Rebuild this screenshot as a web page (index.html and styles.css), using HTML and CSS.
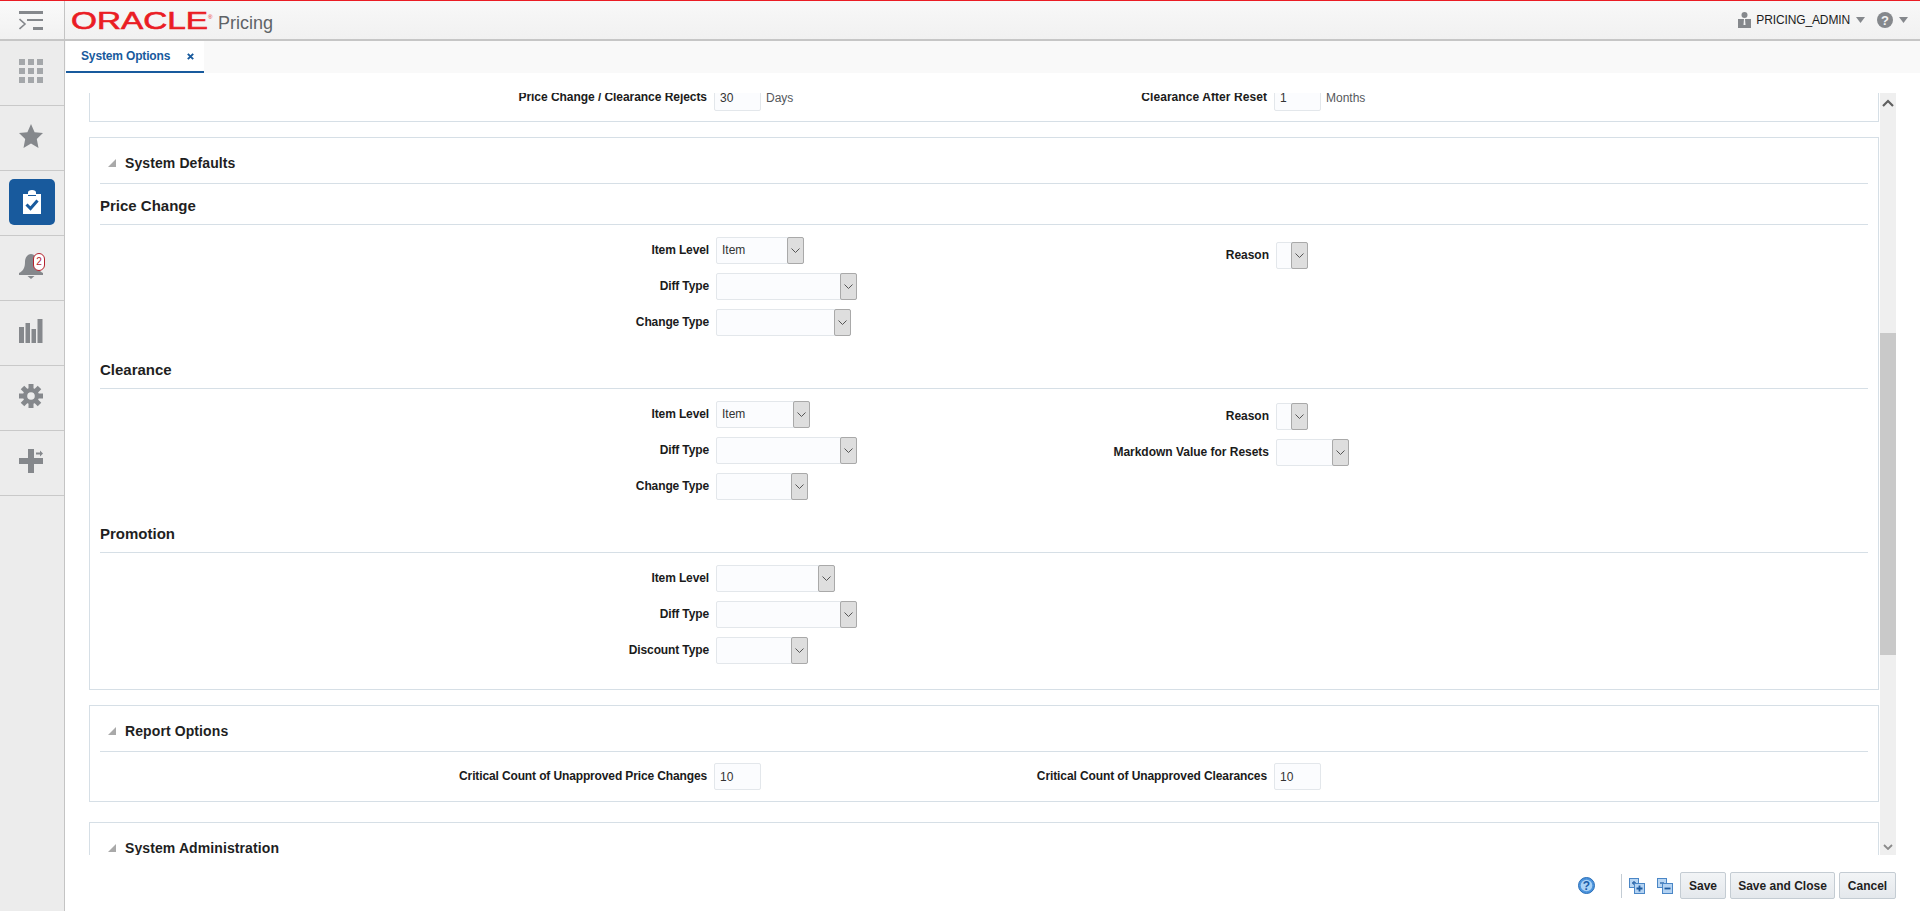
FILE: index.html
```html
<!DOCTYPE html>
<html lang="en">
<head>
<meta charset="utf-8">
<title>System Options</title>
<link rel="stylesheet" href="styles.css">
</head>
<body>
<svg class="defs" width="0" height="0" aria-hidden="true">
  <symbol id="chev" viewBox="0 0 9 5"><path d="M.5.5 4.500 4.500 8.500.5" fill="none" stroke="#555" stroke-width="1"/></symbol>
  <symbol id="tri" viewBox="0 0 8 8"><path d="M8 0V8H0Z" fill="#a9a9a9"/></symbol>
</svg>
<div class="app">
  <nav class="side">
    <div class="side-top">
      <svg width="24" height="20" viewBox="0 0 24 20"><path d="M0 0H24V3H0ZM8 8H24V10H8ZM14 16H24V19H14Z" fill="#85888c"/><path d="M.5 8 6 13 .5 18" fill="none" stroke="#85888c" stroke-width="1.600"/></svg>
    </div>
    <div class="side-item">
      <svg width="24" height="24" viewBox="0 0 24 24" fill="#a4a7aa"><path d="M0 0H6V6H0ZM9 0H15V6H9ZM18 0H24V6H18ZM0 9H6V15H0ZM9 9H15V15H9ZM18 9H24V15H18ZM0 18H6V24H0ZM9 18H15V24H9ZM18 18H24V24H18Z"/></svg>
    </div>
    <div class="side-item">
      <svg width="24" height="24" viewBox="0 0 24 24"><path d="M12 0 15.600 8.200 24 9.100 17.800 15 19.500 24 12 19.400 4.500 24 6.200 15 0 9.100 8.400 8.200Z" fill="#85888c"/></svg>
    </div>
    <div class="side-item">
      <div class="side-active">
        <svg width="18" height="24" viewBox="0 0 18 24"><path d="M0 4H5V2.500A4 2.500 0 0 1 13 2.500V4H18V24H0Z" fill="#fff"/><path d="M5 5.500H13" stroke="#185a9d" stroke-width="1"/><path d="M3.500 14.500 7.500 18.500 14.500 10.500" fill="none" stroke="#185a9d" stroke-width="3"/></svg>
      </div>
    </div>
    <div class="side-item">
      <span class="bell">
        <svg width="24" height="25" viewBox="0 0 24 25"><path d="M12 0C15 0 18 3 18 8 18 14 20 17 24 19V21H0V19C4 17 6 14 6 8 6 3 9 0 12 0Z" fill="#85888c"/><path d="M8.500 22H15.500L12 25Z" fill="#85888c"/></svg>
        <span class="badge">2</span>
      </span>
    </div>
    <div class="side-item">
      <svg width="24" height="24" viewBox="0 0 24 24" fill="#85888c"><path d="M0 8H5V24H0ZM6.500 4H11V24H6.500ZM12.500 10H17V24H12.500ZM18.500 0H23.500V24H18.500Z"/></svg>
    </div>
    <div class="side-item">
      <svg width="24" height="24" viewBox="0 0 24 24"><g stroke="#85888c" stroke-width="5"><path d="M12 0V24M0 12H24M3.500 3.500 20.500 20.500M20.500 3.500 3.500 20.500"/></g><circle cx="12" cy="12" r="8" fill="#85888c"/><circle cx="12" cy="12" r="3.800" fill="#ececec"/></svg>
    </div>
    <div class="side-item">
      <svg width="24" height="24" viewBox="0 0 24 24" fill="#85888c"><path d="M9 0H15V9H24V15H15V24H9V15H0V9H9Z"/><path d="M17 3.500H21V1.500L24 4.500 21 7.500V5.500H17Z"/></svg>
    </div>
  </nav>
  <div class="main">
    <header class="top">
      <svg class="logo" width="147" height="22" viewBox="0 0 147 22"><text x="0" y="20" textLength="137" lengthAdjust="spacingAndGlyphs" class="logo-text">ORACLE</text><text x="137" y="10" class="logo-reg">®</text></svg>
      <span class="app-name">Pricing</span>
      <span class="spacer"></span>
      <svg class="u-ic" width="13" height="16" viewBox="0 0 13 16" fill="#85888c"><circle cx="6.500" cy="3" r="3"/><path d="M0 7H13V16H0Z"/><path d="M6 7H7L7.500 13H5.500Z" fill="#f4f4f4"/></svg>
      <span class="user">PRICING_ADMIN</span>
      <svg class="tri-d" width="9" height="6" viewBox="0 0 9 6"><path d="M0 0H9L4.500 6Z" fill="#85888c"/></svg>
      <svg class="help-ic" width="16" height="16" viewBox="0 0 16 16"><circle cx="8" cy="8" r="8" fill="#85888c"/><text x="8" y="12.500" class="q-grey">?</text></svg>
      <svg class="tri-d2" width="9" height="6" viewBox="0 0 9 6"><path d="M0 0H9L4.500 6Z" fill="#85888c"/></svg>
    </header>
    <div class="tabs">
      <div class="tab"><span>System Options</span><svg class="tab-x" width="7" height="7" viewBox="0 0 7 7"><path d="M.8.8 6.200 6.200M6.200.8.8 6.200" stroke="#185a9d" stroke-width="1.900"/></svg></div>
    </div>
    <div class="scroll">
      <div class="panels">
        <section class="panel panel-clip">
          <div class="inline-row">
            <div class="pair pair-a"><label class="lbl lbl-a lbl-tight">Price Change / Clearance Rejects</label><span class="inp">30</span><span class="unit">Days</span></div>
            <div class="pair"><label class="lbl lbl-b lbl-wide">Clearance After Reset</label><span class="inp">1</span><span class="unit">Months</span></div>
          </div>
        </section>

        <section class="panel panel-main">
          <h2 class="p-head"><svg class="tw" width="8" height="8" viewBox="0 0 8 8"><use href="#tri"/></svg>System Defaults</h2>

          <h3 class="s-head">Price Change</h3>
          <div class="cols">
            <div class="col-l">
              <div class="field"><label class="lbl lbl-l">Item Level</label><span class="sel w88"><span class="val">Item</span><span class="btn"><svg width="9" height="5"><use href="#chev"/></svg></span></span></div>
              <div class="field"><label class="lbl lbl-l">Diff Type</label><span class="sel w141"><span class="val"></span><span class="btn"><svg width="9" height="5"><use href="#chev"/></svg></span></span></div>
              <div class="field"><label class="lbl lbl-l">Change Type</label><span class="sel w135"><span class="val"></span><span class="btn"><svg width="9" height="5"><use href="#chev"/></svg></span></span></div>
            </div>
            <div class="col-r r5">
              <div class="field"><label class="lbl lbl-r">Reason</label><span class="sel w32"><span class="val"></span><span class="btn"><svg width="9" height="5"><use href="#chev"/></svg></span></span></div>
            </div>
          </div>

          <h3 class="s-head s-next">Clearance</h3>
          <div class="cols">
            <div class="col-l">
              <div class="field"><label class="lbl lbl-l">Item Level</label><span class="sel w94"><span class="val">Item</span><span class="btn"><svg width="9" height="5"><use href="#chev"/></svg></span></span></div>
              <div class="field"><label class="lbl lbl-l">Diff Type</label><span class="sel w141"><span class="val"></span><span class="btn"><svg width="9" height="5"><use href="#chev"/></svg></span></span></div>
              <div class="field"><label class="lbl lbl-l">Change Type</label><span class="sel w92"><span class="val"></span><span class="btn"><svg width="9" height="5"><use href="#chev"/></svg></span></span></div>
            </div>
            <div class="col-r r2">
              <div class="field"><label class="lbl lbl-r">Reason</label><span class="sel w32"><span class="val"></span><span class="btn"><svg width="9" height="5"><use href="#chev"/></svg></span></span></div>
              <div class="field"><label class="lbl lbl-r">Markdown Value for Resets</label><span class="sel w73"><span class="val"></span><span class="btn"><svg width="9" height="5"><use href="#chev"/></svg></span></span></div>
            </div>
          </div>

          <h3 class="s-head s-next">Promotion</h3>
          <div class="cols">
            <div class="col-l">
              <div class="field"><label class="lbl lbl-l">Item Level</label><span class="sel w119"><span class="val"></span><span class="btn"><svg width="9" height="5"><use href="#chev"/></svg></span></span></div>
              <div class="field"><label class="lbl lbl-l">Diff Type</label><span class="sel w141"><span class="val"></span><span class="btn"><svg width="9" height="5"><use href="#chev"/></svg></span></span></div>
              <div class="field"><label class="lbl lbl-l">Discount Type</label><span class="sel w92"><span class="val"></span><span class="btn"><svg width="9" height="5"><use href="#chev"/></svg></span></span></div>
            </div>
          </div>
        </section>

        <section class="panel panel-report">
          <h2 class="p-head"><svg class="tw" width="8" height="8" viewBox="0 0 8 8"><use href="#tri"/></svg>Report Options</h2>
          <div class="inline-row report-row">
            <div class="pair pair-a"><label class="lbl lbl-a">Critical Count of Unapproved Price Changes</label><span class="inp">10</span></div>
            <div class="pair"><label class="lbl lbl-b">Critical Count of Unapproved Clearances</label><span class="inp">10</span></div>
          </div>
        </section>

        <section class="panel panel-admin">
          <h2 class="p-head"><svg class="tw" width="8" height="8" viewBox="0 0 8 8"><use href="#tri"/></svg>System Administration</h2>
        </section>
      </div>
      <div class="sbar">
        <svg class="sb-up" width="12" height="8" viewBox="0 0 12 8"><path d="M1 7 6 2 11 7" fill="none" stroke="#5f5f5f" stroke-width="2.200"/></svg>
        <div class="sb-thumb"></div>
        <span class="sb-fill"></span>
        <svg class="sb-dn" width="10" height="6" viewBox="0 0 10 6"><path d="M1 1 5 5 9 1" fill="none" stroke="#8a8a8a" stroke-width="1.800"/></svg>
      </div>
    </div>
    <footer class="foot">
      <svg class="f-help" width="17" height="17" viewBox="0 0 17 17"><circle cx="8.500" cy="8.500" r="8" fill="#4b93dc" stroke="#2a6fb8"/><circle cx="8.500" cy="8.500" r="5.800" fill="#a9d2f6"/><text x="8.500" y="13" class="q-blue">?</text></svg>
      <span class="f-sep"></span>
      <svg class="f-ic" width="16" height="16" viewBox="0 0 16 16"><rect x=".5" y=".5" width="9" height="9" fill="#b9d6f3" stroke="#4a86c6"/><path d="M5 3V7M3 5H7" stroke="#2a64a8" stroke-width="1.300"/><rect x="5.500" y="5.500" width="10" height="10" fill="#b3d2f2" stroke="#4a86c6"/><path d="M10.500 7.500V13.500M7.500 10.500H13.500" stroke="#1d5aa0" stroke-width="1.800"/></svg>
      <svg class="f-ic f-ic2" width="16" height="16" viewBox="0 0 16 16"><rect x=".5" y=".5" width="9" height="9" fill="#b9d6f3" stroke="#4a86c6"/><path d="M3 5H7" stroke="#2a64a8" stroke-width="1.300"/><rect x="5.500" y="5.500" width="10" height="10" fill="#b3d2f2" stroke="#4a86c6"/><path d="M7.500 10.500H13.500" stroke="#1d5aa0" stroke-width="1.800"/></svg>
      <button class="fbtn b-save">Save</button>
      <button class="fbtn b-sc">Save and Close</button>
      <button class="fbtn b-can">Cancel</button>
    </footer>
  </div>
</div>
</body>
</html>
```
FILE: styles.css
```css
* { box-sizing: border-box; }
html, body { margin: 0; height: 911px; overflow: hidden; background: #fff; }
body { font-family: "Liberation Sans", Arial, sans-serif; font-size: 12px; color: #1b1b1b; }
.defs { position: absolute; }
.app { display: flex; height: 911px; border-top: 1px solid #ea1c24; }

/* sidebar */
.side { width: 65px; flex: none; background: #ececec; border-right: 1px solid #c4c4c4; display: flex; flex-direction: column; }
.side-top { height: 40px; flex: none; background: linear-gradient(#fafafa, #f1f1f1); border-bottom: 2px solid #c6c6c6; padding: 10px 0 0 19px; }
.side-top svg { display: block; }
.side-item { height: 65px; flex: none; border-bottom: 1px solid #c9c9c9; display: flex; align-items: center; padding: 0 0 4px 19px; }
.side-active { width: 46px; height: 46px; margin: 2px 0 0 -10px; border-radius: 5px; background: #185a9d; display: flex; align-items: center; justify-content: center; }
.bell { position: relative; display: block; width: 24px; height: 25px; }
.bell svg { display: block; }
.badge { position: absolute; top: -1px; left: 14px; width: 12px; height: 18px; border: 1px solid #b5222d; border-radius: 6px; background: #fff; color: #b5222d; font-size: 10px; line-height: 16px; text-align: center; }

/* main */
.main { flex: 1; min-width: 0; display: flex; flex-direction: column; }
.top { height: 40px; flex: none; display: flex; align-items: center; background: linear-gradient(#f8f8f8, #f1f1f1); border-bottom: 2px solid #c6c6c6; padding: 0 0 0 6px; }
.logo { display: block; flex: none; }
.logo-text { font-family: "Liberation Sans", sans-serif; font-weight: 400; font-size: 23px; fill: #ea1c24; stroke: #ea1c24; stroke-width: .6px; }
.logo-reg { font-size: 6px; fill: #ea1c24; }
.app-name { font-size: 18px; color: #5f6367; margin-top: 7px; }
.spacer { flex: 1; }
.u-ic { display: block; }
.user { margin-left: 5px; font-size: 12px; letter-spacing: -.13px; color: #1c1c1c; }
.tri-d { margin-left: 6px; }
.help-ic { margin-left: 12px; }
.tri-d2 { margin-left: 6px; margin-right: 12px; }
.q-grey { font: 700 13px "Liberation Sans", sans-serif; fill: #f4f4f4; text-anchor: middle; }
.q-blue { font: 700 12px "Liberation Sans", sans-serif; fill: #1a5ca8; text-anchor: middle; }

.tabs { height: 32px; flex: none; background: #f9f9f9; display: flex; padding-left: 1px; }
.tab { width: 138px; background: #fff; border-bottom: 2px solid #185a9d; display: flex; align-items: center; padding-left: 15px; color: #185a9d; font-weight: 700; font-size: 12px; letter-spacing: -.15px; }
.tab-x { margin-left: 17px; display: block; }

.scroll { height: 762px; flex: none; margin-top: 20px; display: flex; padding-left: 24px; }
.panels { width: 1790px; flex: none; height: 762px; overflow: hidden; display: flex; flex-direction: column; }
.panel { flex: none; border: 1px solid #d6dfe6; background: #fff; padding: 0 10px; }
.panel-clip { height: 29px; border-top: 0; overflow: hidden; display: flex; align-items: flex-end; padding-bottom: 10px; padding-left: 0; }
.panel-main { margin-top: 15px; height: 553px; }
.panel-report { margin-top: 15px; height: 97px; }
.panel-admin { margin-top: 20px; height: 90px; }

.p-head { margin: 0; height: 46px; display: flex; align-items: center; font-size: 14px; font-weight: 700; letter-spacing: .1px; color: #1f1f1f; border-bottom: 1px solid #d6dfe6; padding-left: 8px; padding-top: 5px; }
.tw { margin-right: 9px; }
.s-head { margin: 0; height: 41px; display: flex; align-items: center; font-size: 15px; font-weight: 700; color: #1f1f1f; border-bottom: 1px solid #d6dfe6; padding-top: 3px; }
.s-next { margin-top: 12px; }

.cols { display: flex; padding-top: 12px; }
.col-l { width: 900px; flex: none; display: flex; flex-direction: column; gap: 9px; }
.col-r { display: flex; flex-direction: column; gap: 9px; }
.r5 { padding-top: 5px; }
.r2 { padding-top: 2px; }
.field { display: flex; align-items: center; height: 27px; }
.lbl { display: block; font-weight: 700; font-size: 12px; color: #1b1b1b; text-align: right; white-space: nowrap; padding-bottom: 2px; }
.lbl-l { width: 609px; margin-right: 7px; letter-spacing: -.12px; }
.lbl-r { width: 269px; margin-right: 7px; letter-spacing: -.02px; }
.lbl-a { width: 617px; margin-right: 7px; letter-spacing: -.13px; }
.lbl-b { width: 360px; margin-right: 7px; letter-spacing: -.1px; }
.lbl-tight { letter-spacing: -.05px; }
.lbl-wide { letter-spacing: .07px; }

.sel { display: flex; height: 27px; border: 1px solid #e3e7eb; border-radius: 2px; background: #fbfcfe; }
.val { flex: 1; min-width: 0; padding: 0 5px; line-height: 25px; font-size: 12px; color: #333; }
.btn { width: 17px; flex: none; margin: -1px -1px -1px 0; background: #dedede; border: 1px solid #a9a9a9; border-radius: 2px; display: flex; align-items: center; justify-content: center; }
.btn svg { display: block; }
.w32 { width: 32px; }
.w73 { width: 73px; }
.w88 { width: 88px; }
.w92 { width: 92px; }
.w94 { width: 94px; }
.w119 { width: 119px; }
.w135 { width: 135px; }
.w141 { width: 141px; }

.inline-row { display: flex; align-items: center; }
.pair { display: flex; align-items: center; flex: none; }
.pair-a { width: 817px; }
.inp { display: block; width: 47px; height: 27px; border: 1px solid #e3e7eb; border-radius: 2px; background: #fbfcfe; padding: 0 5px; line-height: 27px; font-size: 12px; color: #333; flex: none; }
.unit { margin-left: 5px; color: #55585c; font-size: 12px; }
.report-row { height: 49px; margin-left: -10px; }

/* scrollbar */
.sbar { width: 16px; margin-left: 1px; flex: none; background: #efefef; display: flex; flex-direction: column; align-items: center; padding-top: 6px; padding-bottom: 5px; }
.sb-up { display: block; flex: none; }
.sb-thumb { width: 16px; height: 322px; flex: none; margin-top: 226px; background: #c9c9c9; }
.sb-fill { flex: 1; }
.sb-dn { display: block; flex: none; }

/* footer */
.foot { flex: 1; display: flex; align-items: flex-start; padding-top: 17px; padding-left: 1513px; }
.f-help { margin-top: 5px; flex: none; }
.f-sep { width: 1px; height: 24px; margin-left: 26px; margin-top: 2px; background: #c3ccd4; flex: none; }
.f-ic { margin-left: 7px; margin-top: 6px; flex: none; }
.f-ic2 { margin-left: 12px; }
.fbtn { height: 27px; margin: 0; padding: 0; border: 1px solid #c4ccd3; border-radius: 2px; background: linear-gradient(#f2f4f6, #e4e8ec); font: 700 12px "Liberation Sans", sans-serif; color: #1f1f1f; flex: none; }
.b-save { width: 46px; margin-left: 7px; }
.b-sc { width: 105px; margin-left: 4px; }
.b-can { width: 57px; margin-left: 4px; }
```
